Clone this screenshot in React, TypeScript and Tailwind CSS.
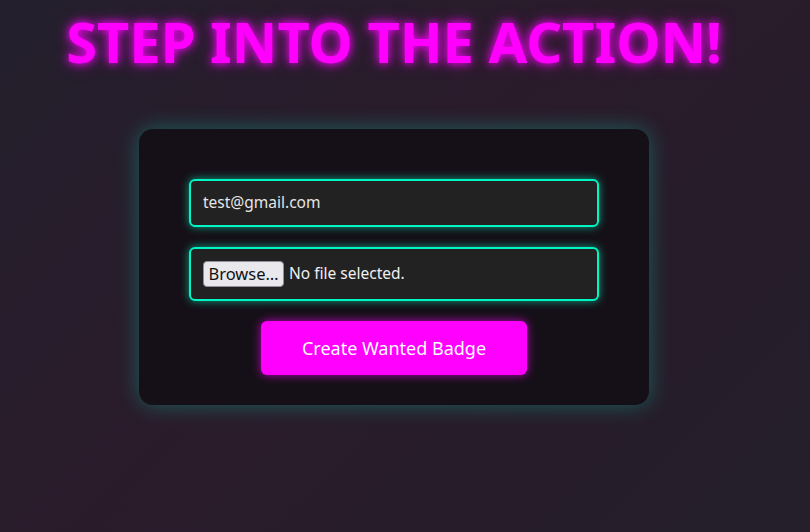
export default function App() {
  return (
    <div className="min-h-[532px] w-full bg-[linear-gradient(135deg,#231f2c_0%,#2a1b2b_45%,#261c2a_75%,#241f2b_100%)] font-['Noto_Sans',sans-serif]">
      <div className="flex w-[788px] flex-col items-center">
        <h1 className="-mt-px text-[56px] font-bold leading-normal text-[#ff00ff] [text-shadow:0_0_8px_#ff00ff,0_0_16px_rgba(255,0,255,0.5)]">
          STEP INTO THE ACTION!
        </h1>
        <div className="mt-[46px] flex h-[276px] w-[510px] flex-col items-center gap-5 rounded-[14px] bg-[#151017] px-[50px] pt-[50px] shadow-[0_0_22px_rgba(0,255,204,0.3)]">
          <div className="flex h-[48px] w-full items-center rounded-[6px] border-2 border-[#00f5c4] bg-[#222222] px-3 shadow-[0_0_8px_rgba(0,255,204,0.6)]">
            <span className="text-[15.5px] text-[#e6e6e6]">test@gmail.com</span>
          </div>
          <div className="flex h-[54px] w-full items-center gap-[5px] rounded-[6px] border-2 border-[#00f5c4] bg-[#222222] px-3 shadow-[0_0_8px_rgba(0,255,204,0.6)]">
            <button className="flex h-[26px] w-[81px] items-center justify-center rounded-[4px] border border-[#8f8f9d] bg-[#e9e9ed] text-[16.5px] text-[#111]">
              Browse…
            </button>
            <span className="text-[15.5px] text-[#f0f0f0]">No file selected.</span>
          </div>
          <button className="flex h-[54px] w-[266px] items-center justify-center rounded-[6px] bg-[#ff00ff] text-[18px] text-white shadow-[0_0_10px_rgba(255,0,255,0.7)]">
            Create Wanted Badge
          </button>
        </div>
      </div>
    </div>
  );
}
